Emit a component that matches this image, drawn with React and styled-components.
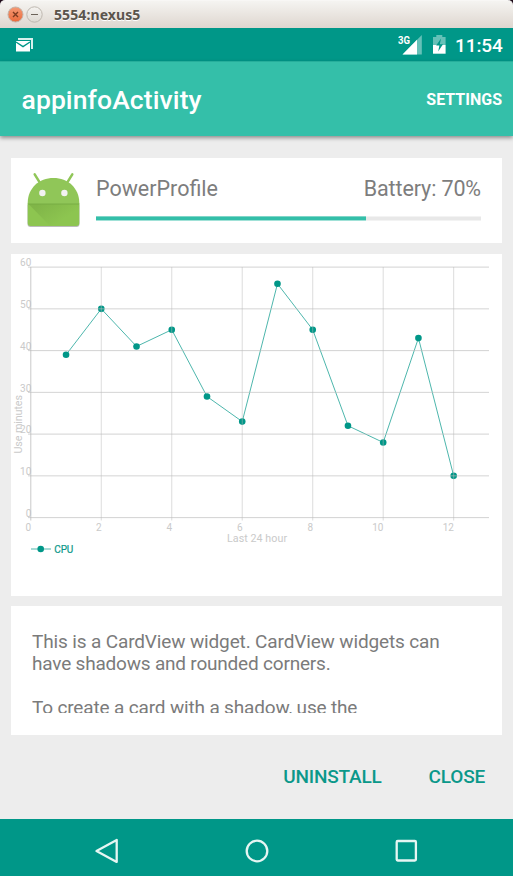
import React from "react";
import styled, { createGlobalStyle } from "styled-components";

const GlobalStyle = createGlobalStyle`
  * { box-sizing: border-box; }
  html, body { margin: 0; padding: 0; background: #000; }
  body { width: 513px; height: 876px; overflow: hidden; font-family: Roboto, sans-serif; }
`;

const Window = styled.div`
  width: 513px;
  height: 876px;
  display: flex;
  flex-direction: column;
  background: #ededed;
`;

const Corners = styled.div`
  background: #1d0a18;
`;

const TitleBar = styled.div`
  height: 28px;
  display: flex;
  align-items: center;
  padding: 1px 0 0 7px;
  border-radius: 5px 5px 0 0;
  border-top: 1px solid #f8f7f5;
  background: linear-gradient(#f5f4f1, #ded6cf);
`;

const WindowTitle = styled.span`
  margin-left: 11px;
  font: 700 14px/20px "Noto Sans", sans-serif;
  letter-spacing: ${(p) => p.$spacing};
  color: #5b544c;
  text-shadow: 0 1px 0 #fff;
`;

const StatusBar = styled.div`
  height: 33px;
  display: flex;
  justify-content: space-between;
  background: #009788;
`;

const StatusGroup = styled.div`
  display: flex;
`;

const Clock = styled.span`
  width: 60px;
  padding-left: 2px;
  font: 500 19px/35px Roboto, sans-serif;
  letter-spacing: -0.1px;
  color: #fff;
`;

const AppBar = styled.header`
  height: 75px;
  display: flex;
  align-items: center;
  justify-content: space-between;
  padding: 2px 11px 0 21.5px;
  background: #34bfa9;
  border-top: 1px solid #26ae9b;
  box-shadow: 0 2px 4px rgba(0, 0, 0, 0.4);
  z-index: 1;
`;

const AppTitle = styled.h1`
  margin: 0;
  font: 500 26.5px/32px Roboto, sans-serif;
  letter-spacing: ${(p) => p.$spacing};
  color: #fff;
`;

const MenuAction = styled.button`
  border: 0;
  padding: 0;
  background: none;
  color: #fff;
  font: 700 16px/20px Roboto, sans-serif;
  letter-spacing: ${(p) => p.$spacing};
`;

const Content = styled.main`
  flex: 1;
  display: flex;
  flex-direction: column;
  gap: 11px;
  padding: 22px 11px 0;
`;

const Card = styled.section`
  height: ${(p) => p.$height}px;
  flex: none;
  background: #fff;
`;

const ProfileCard = styled(Card)`
  display: flex;
  padding: 0 21px 0 10px;
`;

const ProfileBody = styled.div`
  flex: 1;
  margin-left: 10px;
  padding-top: 18px;
`;

const ProfileRow = styled.div`
  display: flex;
  justify-content: space-between;
  font: 400 21.5px/26px Roboto, sans-serif;
  color: #7d7d7d;
`;

const Label = styled.span`
  letter-spacing: ${(p) => p.$spacing};
`;

const Track = styled.div`
  height: 5px;
  margin-top: 14px;
  background: linear-gradient(#f3f3f3 1px, #e8e8e8 1px 4px, #f3f3f3 4px);
`;

const Progress = styled.div`
  width: 70%;
  height: 5px;
  background: linear-gradient(#80d6c8 1px, #34bfa9 1px 4px, #a0e1d7 4px);
`;

const TextCard = styled(Card)`
  margin-top: -1px;
  padding: 25px 21px 22px;
`;

const ClippedText = styled.div`
  height: 82px;
  overflow: hidden;
  font: 400 19px/22px Roboto, sans-serif;
  color: #7b7b7b;
`;

const Line = styled.div`
  height: 22px;
  white-space: nowrap;
  letter-spacing: ${(p) => p.$spacing};
`;

const Actions = styled.div`
  display: flex;
  justify-content: flex-end;
  gap: 47px;
  padding: 20px 17px 0 0;
`;

const FlatButton = styled.button`
  border: 0;
  padding: 0;
  background: none;
  color: #0b988a;
  font: 500 19px/22px Roboto, sans-serif;
  letter-spacing: ${(p) => p.$spacing};
`;

const NavBar = styled.nav`
  height: 57px;
  flex: none;
  display: flex;
  justify-content: center;
  gap: 118px;
  padding: 16px 0 0;
  background: #009788;
`;

const ChartText = styled.text`
  font: 400 10px Roboto, sans-serif;
  fill: #cacaca;
`;

const AxisTitle = styled(ChartText)`
  font-size: 10.7px;
`;

const LegendText = styled(ChartText)`
  fill: #0b988a;
  stroke: #0b988a;
  stroke-width: 0.2px;
`;

const Drawing = styled.svg`
  display: block;
  flex: none;
`;

function WindowButtons() {
  return (
    <Drawing width="36" height="18" viewBox="0 0 36 18">
      <defs>
        <linearGradient id="close" x1="0" y1="0" x2="0" y2="1">
          <stop offset="0" stopColor="#f59a75" />
          <stop offset="1" stopColor="#ea6a3b" />
        </linearGradient>
        <linearGradient id="min" x1="0" y1="0" x2="0" y2="1">
          <stop offset="0" stopColor="#f5f3f0" />
          <stop offset="1" stopColor="#ded9d2" />
        </linearGradient>
      </defs>
      <circle cx="8.5" cy="8.5" r="7.5" fill="url(#close)" stroke="#c4b3a8" />
      <path d="M6 6l5 5M11 6l-5 5" stroke="#7c3a20" strokeWidth="1.4" />
      <circle cx="27.5" cy="8.5" r="7.7" fill="url(#min)" stroke="#beb8b0" />
      <path d="M24 8.5h7" stroke="#6c6359" strokeWidth="1" />
    </Drawing>
  );
}

function MailIcon() {
  return (
    <Drawing width="40" height="33" viewBox="0 0 40 33">
      <path d="M18 10h15v11h-2v-9H18z" fill="#d8f0ed" />
      <path d="M16 13h14v10.5H16z" fill="#fff" />
      <path d="M16 14l7 4.6 7-4.6" fill="none" stroke="#009788" strokeWidth="1.3" />
    </Drawing>
  );
}

const SignalText = styled.text`
  font: 700 11px Roboto, sans-serif;
  fill: #fff;
`;

function SystemIcons() {
  return (
    <Drawing width="55" height="33" viewBox="398 28 55 33">
      <path d="M402.5 54.4L421.8 35V54.4z" fill="#66c1b8" />
      <path d="M402.5 54.4L417 39.8V54.4z" fill="#fff" />
      <SignalText x="398" y="43.8" textLength="12" lengthAdjust="spacingAndGlyphs">3G</SignalText>
      <path d="M433 45V37h3.3v-2h6v2h3.3v8z" fill="#66c1b8" />
      <path d="M433 45h12.6v8.7H433z" fill="#fff" />
      <path d="M441 38.5l-4.8 7h3.2l-1.2 6 4.8-7.2h-3.2z" fill="#009788" />
    </Drawing>
  );
}

function AndroidIcon() {
  return (
    <Drawing width="65" height="85" viewBox="21 158 65 85">
      <defs>
        <linearGradient id="fold" x1="42" y1="202" x2="56" y2="224" gradientUnits="userSpaceOnUse">
          <stop offset="0" stopColor="#80b548" />
          <stop offset="1" stopColor="#8dc550" />
        </linearGradient>
      </defs>
      <path d="M27.5 205h52v19a3 3 0 0 1-3 3h-46a3 3 0 0 1-3-3z" fill="#aaa" opacity=".8" />
      <path d="M34.7 174.3l6.2 10M72.3 174.3l-6.2 10" stroke="#90c658" strokeWidth="2.5" strokeLinecap="round" />
      <path d="M27.7 204v-1.5C28 188 39 178 53.5 178S79 188 79.3 202.5v1.5z" fill="#90c658" />
      <path d="M27.7 204h51.6v19a3 3 0 0 1-3 3h-45.6a3 3 0 0 1-3-3z" fill="#8dc550" />
      <path d="M28.5 204l21.5 22h25L79 220V204z" fill="url(#fold)" />
      <path d="M27.7 204h51.8" stroke="#76ab43" strokeWidth=".9" />
      <circle cx="42.4" cy="193" r="3.2" fill="#f2f2f2" />
      <circle cx="64.4" cy="193" r="3.2" fill="#f2f2f2" />
    </Drawing>
  );
}

const VALUES = [39, 50, 41, 45, 29, 23, 56, 45, 22, 18, 43, 10];
const px = (hour) => 30.8 + hour * 35.24;
const py = (value) => 517.6 - value * 4.175;
const Y_TICKS = [0, 10, 20, 30, 40, 50, 60];
const X_TICKS = [0, 2, 4, 6, 8, 10, 12];

function UsageChart() {
  const points = VALUES.map((v, i) => `${px(i + 1)},${py(v)}`).join(" ");
  return (
    <Drawing width="491" height="342" viewBox="11 254 491 342">
      {Y_TICKS.map((v) => (
        <ChartText key={v} x="31.3" y={py(v) - 0.8} textAnchor="end">{v}</ChartText>
      ))}
      {X_TICKS.map((h) => (
        <ChartText key={h} x={px(h) + 0.3} y="531" textAnchor="end">{h}</ChartText>
      ))}
      <AxisTitle x="227" y="541.8" textLength="60">Last 24 hour</AxisTitle>
      <AxisTitle transform="translate(21.5 453.5) rotate(-90)" textLength="58.5">Use minutes</AxisTitle>
      <polyline points={points} fill="none" stroke="#009788" strokeWidth=".7" />
      {VALUES.map((v, i) => (
        <circle key={i} cx={px(i + 1)} cy={py(v)} r="3.3" fill="#009788" />
      ))}
      {Y_TICKS.map((v) => (
        <path key={v} d={`M28 ${py(v)}H489`} stroke="#bbb" strokeOpacity=".65" strokeWidth="1" />
      ))}
      {X_TICKS.map((h) => (
        <path key={h} d={`M${px(h)} 267V520.5`} stroke="#bbb" strokeOpacity={h ? 0.5 : 0.8} strokeWidth="1" />
      ))}
      <path d="M31 549h20" stroke="#009788" strokeWidth=".7" />
      <circle cx="40.7" cy="549" r="3.3" fill="#009788" />
      <LegendText x="54.3" y="552.6" textLength="19">CPU</LegendText>
    </Drawing>
  );
}

function NavIcon({ children }) {
  return (
    <Drawing width="32" height="32" viewBox="0 0 32 32" fill="none" stroke="#e6f6f3" strokeWidth="2.3" strokeLinejoin="round">
      {children}
    </Drawing>
  );
}

export default function App() {
  return (
    <>
      <GlobalStyle />
      <Window>
        <Corners>
          <TitleBar>
            <WindowButtons />
            <WindowTitle $spacing="0.1px">5554:nexus5</WindowTitle>
          </TitleBar>
        </Corners>
        <StatusBar>
          <MailIcon />
          <StatusGroup>
            <SystemIcons />
            <Clock>11:54</Clock>
          </StatusGroup>
        </StatusBar>
        <AppBar>
          <AppTitle $spacing="0.1px">appinfoActivity</AppTitle>
          <MenuAction $spacing="0">SETTINGS</MenuAction>
        </AppBar>
        <Content>
          <ProfileCard $height={85}>
            <AndroidIcon />
            <ProfileBody>
              <ProfileRow>
                <Label $spacing="0">PowerProfile</Label>
                <Label $spacing="-0.12px">Battery: 70%</Label>
              </ProfileRow>
              <Track>
                <Progress />
              </Track>
            </ProfileBody>
          </ProfileCard>
          <Card $height={342}>
            <UsageChart />
          </Card>
          <TextCard $height={129}>
            <ClippedText>
              <Line $spacing="-0.14px">This is a CardView widget. CardView widgets can</Line>
              <Line $spacing="-0.2px">have shadows and rounded corners.</Line>
              <Line />
              <Line $spacing="-0.16px">To create a card with a shadow, use the</Line>
            </ClippedText>
          </TextCard>
          <Actions>
            <FlatButton $spacing="-0.2px">UNINSTALL</FlatButton>
            <FlatButton $spacing="-0.2px">CLOSE</FlatButton>
          </Actions>
        </Content>
        <NavBar>
          <NavIcon><path d="M25.7 4.9v22L5.5 16z" /></NavIcon>
          <NavIcon><circle cx="16" cy="16" r="10.3" /></NavIcon>
          <NavIcon><rect x="5.7" y="6" width="19.2" height="19.5" rx="1" /></NavIcon>
        </NavBar>
      </Window>
    </>
  );
}
